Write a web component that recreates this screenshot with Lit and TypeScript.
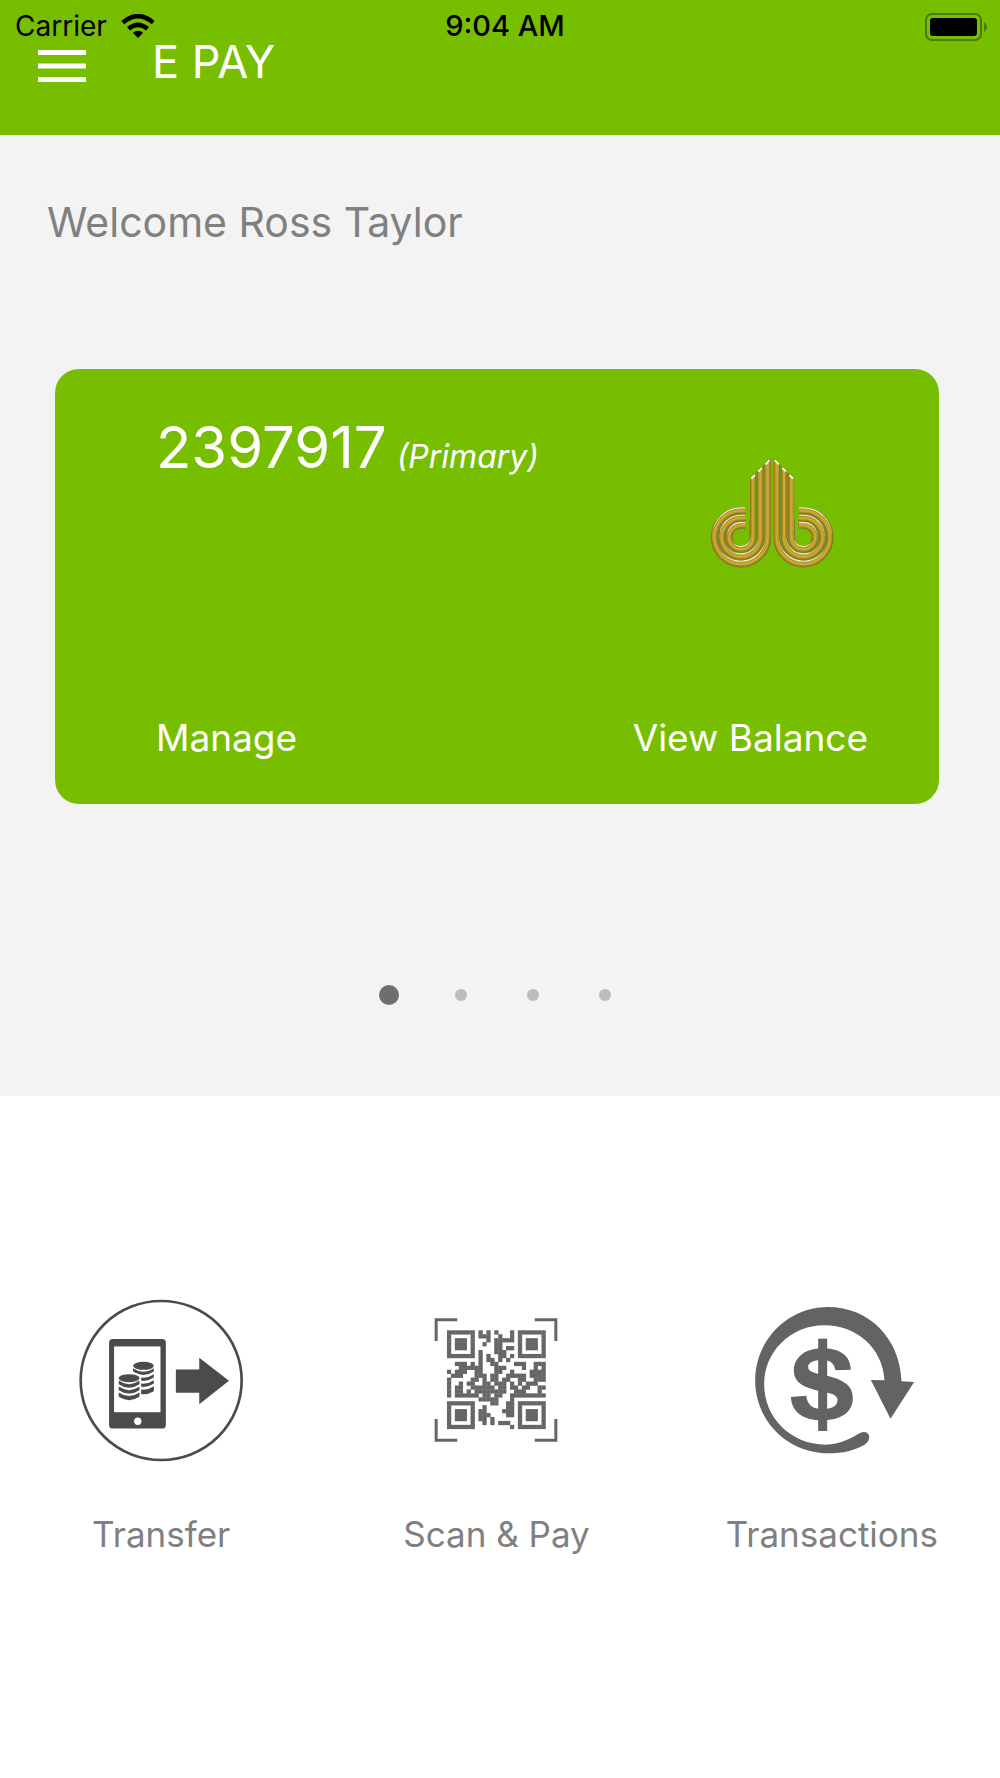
import { LitElement, html, css, svg } from "lit";
import { customElement, state } from "lit/decorators.js";
import { classMap } from "lit/directives/class-map.js";

const QR_ROWS = [
  "11111110" + "101010001" + "01111111",
  "10000010" + "111001001" + "01000001",
  "10111010" + "001011111" + "01011101",
  "10111010" + "010011000" + "01011101",
  "10111010" + "000011011" + "01011101",
  "10000010" + "100011100" + "01000001",
  "11111110" + "101001101" + "01111111",
  "00000000" + "101101010" + "00000000",
  "00111010" + "100110000" + "11100111",
  "00011111" + "100011100" + "00100101",
  "10111001" + "100011001" + "00001111",
  "01110001" + "110110011" + "11101111",
  "10000011" + "010110110" + "01100111",
  "10010110" + "011011101" + "01011100",
  "10110011" + "111101101" + "10110011",
  "10110101" + "111111100" + "11100010",
  "10111111" + "011011001" + "11111111",
  "00000000" + "111110001" + "00000000",
  "11111110" + "000110011" + "01111111",
  "10000010" + "010000011" + "01000001",
  "10111010" + "110000111" + "01011101",
  "10111010" + "111000011" + "01011101",
  "10111010" + "110100000" + "01011101",
  "10000010" + "010101110" + "01000001",
  "11111110" + "000000001" + "01111111",
];

const transferIcon = html`<svg class="icon" width="165" height="163" viewBox="28 28 494 488" aria-hidden="true">
  <ellipse cx="274" cy="272" rx="241" ry="238" fill="none" stroke="#4b4b4b" stroke-width="8" />
  <rect x="118" y="148" width="170" height="268" rx="11" fill="#4b4b4b" />
  <rect x="133" y="170" width="139" height="197" fill="#fff" />
  <circle cx="204" cy="394" r="11" fill="#fff" />
  <path d="M318 239H388V204L477 273L388 343V309H318Z" fill="#4b4b4b" />
  <g fill="#4b4b4b">
    <ellipse cx="221" cy="228" rx="31" ry="12" />
    <path d="M190 235Q221 257 252 235V245Q221 266 190 245Z" />
    <path d="M190 253Q221 274 252 253V263Q221 284 190 263Z" />
    <path d="M190 271Q221 292 252 271V281Q221 302 190 281Z" />
    <path d="M190 289Q221 310 252 289V304Q221 322 190 304Z" />
  </g>
  <path d="M143 262Q150 247 178 247Q208 247 214 262V330H143Z" fill="#fff" />
  <g fill="#4b4b4b">
    <ellipse cx="178" cy="265" rx="31" ry="12" />
    <path d="M147 272Q178 294 209 272V283Q178 304 147 283Z" />
    <path d="M147 290Q178 312 209 290V301Q178 321 147 301Z" />
    <path d="M147 308Q178 329 209 308V321Q178 341 147 321Z" />
  </g>
</svg>`;

const scanIcon = html`<svg class="icon" width="124" height="124" viewBox="28 26 371 373" aria-hidden="true">
  <path d="M33.500 95V31.500H97M330 31.500H393.500V95M393.500 330V393.500H330M97 393.500H33.500V330" fill="none" stroke="#666" stroke-width="9" />
  <g transform="translate(66 63) scale(11.850)" fill="#666">
    ${QR_ROWS.map((row, y) =>
      [...row].map((c, x) => (c === "1" ? svg`<rect x=${x} y=${y} width="1.080" height="1.080" />` : null))
    )}
  </g>
</svg>`;

const transactionsIcon = html`<svg class="icon" width="167" height="150" viewBox="24 42 500 450" aria-hidden="true">
  <g fill="#636363">
    <path d="M484 271C480 142 386 48 264 48C143 48 45 147 45 268C45 391 143 487 266 487C308 487 343 478 373 461C385 453 389 442 386 432C382 423 371 421 360 426C330 443 301 460 256 461C153 461 72 381 72 280C72 181 153 103 252 103C350 103 428 172 433 268L392 267L451 383L522 273Z" />
    <rect x="234" y="143" width="27" height="277" />
    <path d="M332 236C330 190 295 172 247 172C195 172 161 200 161 238C161 278 195 291 247 302C280 308 292 314 292 327C292 345 275 354 248 354C215 354 202 340 198 314L152 318C155 365 190 388 247 388C305 388 338 362 338 322C338 280 305 264 250 252C215 245 204 240 204 228C204 214 220 207 247 207C272 207 282 218 286 238Z" />
  </g>
</svg>`;

const RINGS = [
  "M233 50V293A80 80 0 1 1 153 213H167",
  "M211 50V293A58 58 0 1 1 153 235H167",
  "M189 50V293A36 36 0 1 1 153 257H167",
];

const logoHalf = svg`
  <g clip-path="url(#slant)" fill="none">
    ${RINGS.map((d) => svg`<path d=${d} stroke="#6f8a3c" stroke-width="22" />`)}
    ${RINGS.map((d) => svg`<path d=${d} stroke="#94761a" stroke-width="18" />`)}
    ${RINGS.map((d) => svg`<path d=${d} stroke="#efeddc" stroke-width="10" transform="translate(-1 -5)" />`)}
    ${RINGS.map((d) => svg`<path d=${d} stroke="#b08e20" stroke-width="13" />`)}
    ${RINGS.map((d) => svg`<path d=${d} stroke="#caa832" stroke-width="7" />`)}
  </g>
  <path d="M184 117L195 106M205 96L216 85M227 74L239 61" stroke="#fff" stroke-width="5" />`;

const bankLogo = html`<svg class="logo" width="124" height="112" viewBox="60 52 372 336" role="img" aria-label="Bank logo">
  <defs>
    <clipPath id="slant"><path d="M60 202H168V385H60ZM168 240H180V118L243 56V385H168Z" /></clipPath>
  </defs>
  <g>${logoHalf}</g>
  <g transform="translate(493 0) scale(-1 1)">${logoHalf}</g>
</svg>`;

@customElement("app-root")
export class AppRoot extends LitElement {
  @state() private page = 0;

  static styles = css`
    :host {
      display: flex;
      flex-direction: column;
      min-height: 100vh;
      background: #fff;
      font-family: Inter, "Liberation Sans", sans-serif;
    }
    button {
      border: 0;
      padding: 0;
      margin: 0;
      background: none;
      font: inherit;
      color: inherit;
      cursor: pointer;
    }
    svg {
      display: block;
    }
    .header {
      background: #78be00;
      color: #fff;
      padding-bottom: 51px;
    }
    .status {
      display: grid;
      grid-template-columns: 1fr auto 1fr;
      align-items: center;
      height: 40px;
      padding: 8px 12px 0 15px;
      box-sizing: border-box;
      color: #000;
      font-size: 28px;
      line-height: 36px;
    }
    .carrier {
      display: flex;
      align-items: center;
      gap: 14px;
    }
    .time {
      font-size: 29px;
      font-weight: 500;
      padding-left: 7px;
    }
    .battery {
      justify-self: end;
    }
    .nav {
      display: flex;
      align-items: center;
      gap: 66px;
      height: 44px;
      padding-left: 38px;
    }
    .menu {
      padding-top: 7px;
    }
    .title {
      margin: 0;
      font-size: 45px;
      font-weight: 400;
      line-height: 44px;
    }
    .accounts {
      background: #f3f3f3;
      padding: 62px 61px 91px 55px;
    }
    .welcome {
      margin: 0 0 122px -8px;
      font-size: 41px;
      font-weight: 400;
      line-height: 50px;
      color: #808080;
    }
    .card {
      display: flex;
      flex-direction: column;
      justify-content: space-between;
      min-height: 435px;
      box-sizing: border-box;
      padding: 46px 71px 42px 101px;
      border-radius: 24px;
      background: #78be00;
      color: #fff;
    }
    .summary {
      display: flex;
      justify-content: space-between;
      align-items: flex-start;
    }
    .number {
      display: flex;
      align-items: baseline;
      gap: 10px;
      font-size: 58px;
      font-weight: 400;
      line-height: 64px;
    }
    .tag {
      font-size: 32px;
      font-style: italic;
    }
    .logo {
      margin: 42px 34px 0 0;
    }
    .actions {
      display: flex;
      justify-content: space-between;
      font-size: 37px;
      line-height: 48px;
    }
    .dots {
      display: flex;
      justify-content: center;
      gap: 52px;
      margin-top: 181px;
    }
    .dot {
      display: grid;
      place-items: center;
      width: 20px;
      height: 20px;
    }
    .dot::before {
      content: "";
      width: 12px;
      height: 12px;
      border-radius: 50%;
      background: #bdbdbd;
    }
    .dot.active::before {
      width: 20px;
      height: 20px;
      background: #6e6e6e;
    }
    .tiles {
      display: grid;
      grid-template-columns: repeat(3, 1fr);
      column-gap: 13px;
      padding: 202px 7px 0 0;
    }
    .tile {
      display: flex;
      flex-direction: column;
      align-items: center;
      gap: 50px;
      color: #808080;
      font-size: 35px;
      line-height: 44px;
    }
    .art {
      display: grid;
      place-items: center;
      height: 164px;
    }
  `;

  render() {
    return html`
      <header class="header">
        <div class="status">
          <span class="carrier">
            Carrier
            <svg width="34" height="25" viewBox="0 0 34 25" aria-hidden="true">
              <path d="M17 24L11.800 18.800Q17 14.800 22.200 18.800Z" />
              <path d="M7.500 14.800Q17 6.800 26.500 14.800M1.800 8.600Q17 -4.400 32.200 8.600" fill="none" stroke="#000" stroke-width="4.500" />
            </svg>
          </span>
          <span class="time">9:04 AM</span>
          <svg class="battery" width="63" height="29" viewBox="0 0 63 29" aria-hidden="true">
            <rect x="1" y="2" width="55" height="26" rx="6" fill="none" stroke="#4d7a00" stroke-width="2" />
            <rect x="5" y="6" width="47" height="18" rx="3" />
            <path d="M59 10Q62 12 62 15Q62 18 59 20Z" fill="#4d7a00" />
          </svg>
        </div>
        <div class="nav">
          <button class="menu" aria-label="Open menu">
            <svg width="48" height="34" viewBox="0 0 48 34" aria-hidden="true">
              <path d="M0 3.500H48M0 17H48M0 30.500H48" stroke="#fff" stroke-width="5" />
            </svg>
          </button>
          <h1 class="title">E PAY</h1>
        </div>
      </header>
      <section class="accounts">
        <h2 class="welcome">Welcome Ross Taylor</h2>
        <article class="card">
          <div class="summary">
            <div class="number">2397917<span class="tag">(Primary)</span></div>
            ${bankLogo}
          </div>
          <div class="actions">
            <button>Manage</button>
            <button>View Balance</button>
          </div>
        </article>
        <div class="dots">
          ${[0, 1, 2, 3].map(
            (i) => html`<button
              class=${classMap({ dot: true, active: i === this.page })}
              aria-label="Account ${i + 1}"
              @click=${() => (this.page = i)}
            ></button>`
          )}
        </div>
      </section>
      <nav class="tiles">
        <button class="tile"><span class="art">${transferIcon}</span>Transfer</button>
        <button class="tile"><span class="art">${scanIcon}</span>Scan &amp; Pay</button>
        <button class="tile"><span class="art">${transactionsIcon}</span>Transactions</button>
      </nav>
    `;
  }
}
